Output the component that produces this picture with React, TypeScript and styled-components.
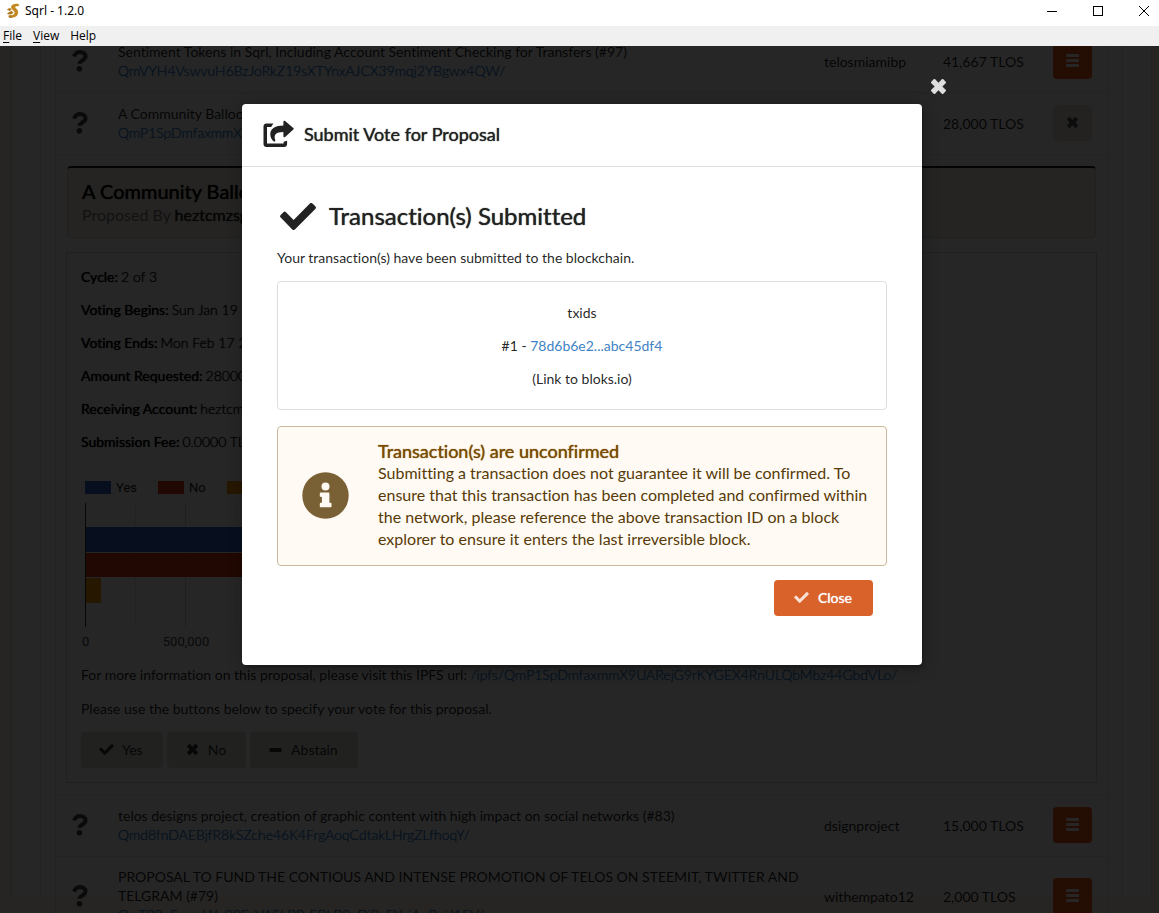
import React from "react";
import styled, { createGlobalStyle, css } from "styled-components";

const Global = createGlobalStyle`
  *, *::before, *::after { box-sizing: border-box; }
  html, body { margin: 0; padding: 0; }
  body {
    font-family: Lato, "Liberation Sans", sans-serif;
    font-size: 14px;
    line-height: 19px;
    font-variant-ligatures: no-common-ligatures;
    color: rgba(0, 0, 0, 0.87);
    overflow: hidden;
  }
  button { font-family: inherit; font-variant-ligatures: inherit; }
  h1, h2, h3, p { margin: 0; font-weight: 400; }
`;

const fauxBold = css`
  font-weight: 400;
  text-shadow: 0 0 1px currentColor;
`;

/* ---------- window chrome ---------- */

const Window = styled.div`
  display: flex;
  flex-direction: column;
  height: 100vh;
  overflow: hidden;
`;

const TitleBar = styled.header`
  display: flex;
  align-items: center;
  flex: none;
  height: 26px;
  padding: 0 7px 5px 6px;
  background: #fff;
  color: #000;
  font: 12px/16px "Noto Sans", "Open Sans", sans-serif;
`;

const AppName = styled.span`
  flex: 1;
  margin-left: 5px;
`;

const WindowControls = styled.div`
  display: flex;
  gap: 30px;
`;

const WindowButton = styled.button`
  display: flex;
  width: 16px;
  height: 16px;
  padding: 0;
  border: 0;
  background: none;
`;

const MenuBar = styled.nav`
  display: flex;
  align-items: center;
  flex: none;
  gap: 11px;
  height: 20px;
  padding: 0 3px;
  background: #f0f0f0;
`;

const MenuButton = styled.button`
  padding: 0;
  border: 0;
  background: none;
  color: #000;
  font: 12px/16px "Open Sans", "Noto Sans", sans-serif;

  u { text-underline-offset: 2px; }
`;

const Stage = styled.div`
  position: relative;
  flex: 1;
  min-height: 0;
  overflow: hidden;
  background: #fcf3e6;
`;

/* ---------- page below the dimmer ---------- */

const Page = styled.main`
  height: 100%;
  margin: 0 7px 0 11px;
  border: solid #e2e0dc;
  border-width: 0 1px;
  padding: 0 28px;
  background: #fff;
`;

const Panel = styled.section`
  height: 100%;
  border: solid #e0e0e0;
  border-width: 0 1px;
  padding: 0 14px;
`;

const ProposalTable = styled.table`
  width: 100%;
  margin-top: -17px;
  border: 1px solid #e0e0e0;
  border-collapse: separate;
  border-spacing: 0;
  table-layout: fixed;
`;

const Column = styled.col<{ $w?: number }>`
  width: ${(p) => (p.$w ? `${p.$w}px` : "auto")};
`;

const Cell = styled.td<{ $icon?: boolean }>`
  height: 62px;
  padding: ${(p) => (p.$icon ? "10px 14px 12px 11px" : "10px 11px 12px")};
  border-top: 1px solid #e8e8e8;
  vertical-align: middle;
  text-align: ${(p) => (p.$icon ? "center" : "left")};

  > svg { display: inline-block; vertical-align: middle; }
`;

const DataCell = styled(Cell)`
  padding: 11px;
`;

const DetailCell = styled.td`
  padding: 11px 10px;
  border-top: 1px solid #e8e8e8;
`;

const Link = styled.a`
  color: #4183c4;
  text-decoration: none;
`;

const PageLink = styled(Link)`
  color: #1f74c8;
  font-weight: 300;
  text-shadow: 0 0 1px currentColor;
`;

const BlockLink = styled(PageLink)`
  display: block;
`;

const IconButton = styled.button<{ $orange?: boolean }>`
  display: flex;
  align-items: center;
  justify-content: center;
  width: 39px;
  height: 36px;
  padding: 0 0 1px;
  border: 0;
  border-radius: 4px;
  background: ${(p) => (p.$orange ? "#f2570f" : "#e8e5df")};
  color: ${(p) => (p.$orange ? "#fff" : "#555")};
`;

const DetailHeader = styled.div`
  height: 72px;
  margin: 0 1px;
  padding: 10px 14px;
  border: 1px solid #d8d4ce;
  border-top: 2px solid #1b1c1d;
  border-radius: 4px;
  background: #f8f2ea;
`;

const DetailTitle = styled.h2`
  ${fauxBold}
  font-size: 20px;
  line-height: 26px;
  color: #000;
`;

const Proposer = styled.p`
  font-size: 16px;
  line-height: 22px;
  color: #777;

  b { ${fauxBold} color: #222; }
`;

const DetailBody = styled.div`
  margin-top: 14px;
  height: 531px;
  padding: 14px;
  border: 1px solid #d4d4d5;
`;

const Facts = styled.dl`
  display: grid;
  gap: 14px;
  margin: 0;

  div { display: flex; gap: 3px; white-space: nowrap; }
  dt { ${fauxBold} color: #000; }
  dd { margin: 0; color: #000; font-weight: 300; text-shadow: 0 0 1px currentColor; }
`;

const Chart = styled.svg`
  display: block;
  width: 100%;
  height: 180px;
  margin: 24px 0 9px;
  font-family: Roboto, "Liberation Sans", sans-serif;
  font-size: 13px;
`;

const Note = styled.p`
  margin-bottom: 13px;
  line-height: 21px;
`;

const VoteButtons = styled.div`
  display: flex;
  gap: 4px;
`;

const VoteButton = styled.button`
  display: flex;
  align-items: center;
  gap: 8px;
  height: 36px;
  padding: 0 20px 1px 18px;
  border: 0;
  border-radius: 4px;
  background: #dddad3;
  color: #333;
  font-size: 14px;

  svg { width: 15px; }
`;

/* ---------- dimmer and dialog ---------- */

const Dimmer = styled.div`
  position: absolute;
  inset: 0;
  display: flex;
  align-items: flex-start;
  justify-content: center;
  padding: 58px 0 0 5px;
  background: rgba(0, 0, 0, 0.85);
`;

const Dialog = styled.div`
  position: relative;
  width: 680px;
  border-radius: 4px;
  background: #fff;
  box-shadow: 1px 3px 3px 0 rgba(0, 0, 0, 0.2), 1px 3px 15px 2px rgba(0, 0, 0, 0.2);
`;

const DismissButton = styled.button`
  position: absolute;
  top: -25px;
  right: -24px;
  display: flex;
  padding: 0;
  border: 0;
  background: none;
  color: #dedede;
`;

const DialogHeader = styled.header`
  display: flex;
  align-items: center;
  gap: 10px;
  height: 63px;
  padding: 0 21px 2px;
  border-bottom: 1px solid #dededf;
`;

const DialogTitle = styled.h1`
  ${fauxBold}
  font-size: 18px;
  line-height: 24px;
  color: #222;
`;

const DialogBody = styled.div`
  padding: 33px 35px 49px;
`;

const Submitted = styled.h2`
  ${fauxBold}
  display: flex;
  align-items: center;
  gap: 12px;
  padding-left: 2px;
  font-size: 24px;
  line-height: 32px;
  color: #222;
`;

const Lead = styled.p`
  margin: 16px 0 14px;
`;

const TxBox = styled.div`
  display: grid;
  gap: 14px;
  padding: 21px 14px;
  border: 1px solid #dededf;
  border-radius: 4px;
  text-align: center;
`;

const Warning = styled.div`
  display: flex;
  align-items: center;
  gap: 29px;
  margin: 16px 0 14px;
  padding: 13px 14px 15px 24px;
  border: 1px solid #c9ba9b;
  border-radius: 4px;
  background: #fffaf3;
  color: #573a08;
  font-size: 16px;
  line-height: 22px;

  > svg { flex: none; }
`;

const WarningTitle = styled.h3`
  ${fauxBold}
  font-size: 18px;
  line-height: 22px;
  color: #794b02;
`;

const Actions = styled.div`
  display: flex;
  justify-content: flex-end;
  padding-right: 14px;
`;

const CloseButton = styled.button`
  ${fauxBold}
  display: flex;
  align-items: center;
  gap: 9px;
  height: 36px;
  padding: 0 21px 1px 20px;
  border: 0;
  border-radius: 4px;
  background: #d9622b;
  color: #fff;
  font-size: 14px;
`;

/* ---------- icons ---------- */

type IconProps = { w: number; h: number };

const Check = ({ w, h, opacity = 1 }: IconProps & { opacity?: number }) => (
  <svg width={w} height={h} viewBox="0 0 36 27" fill="currentColor" opacity={opacity} aria-hidden>
    <path d="M.7 14.5a1.8 1.8 0 0 1 0-2.6l2.7-2.7a1.8 1.8 0 0 1 2.6 0l7.6 7.7L29.9.6a1.8 1.8 0 0 1 2.6 0l2.8 2.7a1.8 1.8 0 0 1 0 2.6L14.9 26.4a1.8 1.8 0 0 1-2.6 0z" />
  </svg>
);

const Cross = ({ w, h }: IconProps) => (
  <svg width={w} height={h} viewBox="0 0 14 14" fill="currentColor" aria-hidden>
    <path d="M13.7 10.1c.4.4.4 1 0 1.400l-2.200 2.200c-.4.4-1 .4-1.400 0L7 10.600l-3.100 3.100c-.4.4-1 .4-1.400 0L.3 11.500c-.4-.4-.4-1 0-1.400L3.400 7 .3 3.900c-.4-.4-.4-1 0-1.400L2.500.3c.4-.4 1-.4 1.400 0L7 3.400 10.100.3c.4-.4 1-.4 1.400 0l2.200 2.200c.4.4.4 1 0 1.400L10.600 7z" />
  </svg>
);

const Minus = () => (
  <svg width="12" height="12" viewBox="0 0 12 12" fill="currentColor" aria-hidden>
    <rect y="4" width="12" height="4" rx="1" />
  </svg>
);

const Bars = () => (
  <svg width="13" height="13" viewBox="0 0 13 13" fill="currentColor" aria-hidden>
    <rect y="0" width="13" height="3" rx="1" />
    <rect y="5" width="13" height="3" rx="1" />
    <rect y="10" width="13" height="3" rx="1" />
  </svg>
);

const Question = () => (
  <svg width="16" height="22" viewBox="0 0 16 22" aria-hidden>
    <path d="M2 6.500C3.400 3.300 5.200 2 8 2c3 0 5.500 1.700 5.500 4.500 0 4-6 3.800-6 7.300" fill="none" stroke="#444" strokeWidth="4" />
    <circle cx="7.400" cy="18.700" r="2.800" fill="#444" />
  </svg>
);

const Share = () => (
  <svg width="31" height="28" viewBox="0 0 31 28" fill="#222" aria-hidden>
    <path d="M10.500 3.500H3.300C1.800 3.500.500 4.800.500 6.300v17.900C.500 25.700 1.800 27 3.300 27h18c1.500 0 2.800-1.300 2.800-2.800v-3.400l-3.500 1v1.700H4V7h4.200c.6-1.300 1.300-2.500 2.300-3.500z" />
    <path d="M30.300 8.100 22.100.900c-.7-.6-1.700-.1-1.700.8v3.700C12.500 5.600 7.300 8 7.300 14.400c0 2.900 1.500 5.600 3.600 7 .7.500 1.700-.1 1.400-.9-1.900-6.500.8-8.500 8.100-8.600v4.300c0 .9 1 1.400 1.700.8l8.200-7.400c.5-.4.5-1.100 0-1.500z" />
  </svg>
);

const Info = () => (
  <svg width="47" height="47" viewBox="0 0 47 47" aria-hidden>
    <circle cx="23.500" cy="23.500" r="23.200" fill="#7a6035" />
    <g fill="#fffaf3">
      <circle cx="23.500" cy="14.400" r="4" />
      <path d="M18.900 20.400h7.400c.6 0 1.100.5 1.100 1.100v9.300h1c.6 0 1.100.5 1.100 1.100v2.300c0 .6-.5 1.100-1.100 1.100h-9.500c-.6 0-1.100-.5-1.100-1.100v-2.300c0-.6.5-1.100 1.100-1.100h1v-5.900h-1c-.6 0-1.100-.5-1.100-1.100v-2.300c0-.6.5-1.100 1.100-1.100z" />
    </g>
  </svg>
);

const Squirrel = () => (
  <svg width="14" height="16" viewBox="0 0 14 16" aria-hidden>
    <path d="M13 1.200C10 .2 6 .8 5.200 3.300c-.6 2.200.9 3.200 2.300 4.400 1.500 1.300 1.300 2.700.3 3.600-1.300 1.200-3.300 1-4.800.6 1 2.600 5 3.400 7.400 1.400 2.300-2 2.200-5.300.3-7.200C9.500 5 8.700 4.200 9.700 3.500c.8-.5 2-.1 3-.6z" fill="#c48a22" />
    <path d="M.8 6.500 4 4.800l1.600 2-2 1.200zM1.500 10l4-2.200 2 2L5 11.500l-3.500-.3zM2 12.800l3-.3 1.800 2.300-3.300.2z" fill="#b07a20" />
  </svg>
);

/* ---------- content ---------- */

type Proposal = { title: string; cid: string; owner: string; amount: string; open?: boolean };

const before: Proposal[] = [
  { title: "Sentiment Tokens in Sqrl, Including Account Sentiment Checking for Transfers (#97)", cid: "QmVYH4VswvuH6BzJoRkZ19sXTYnxAJCX39mqj2YBgwx4QW/", owner: "telosmiamibp", amount: "41,667 TLOS" },
  { title: "A Community Balloon", cid: "QmP1SpDmfaxmmX9UARejG9rKYGEX4RnULQbMbz44GbdVLo/", owner: "heztcmzsgqge", amount: "28,000 TLOS", open: true },
];

const after: Proposal[] = [
  { title: "telos designs project, creation of graphic content with high impact on social networks (#83)", cid: "Qmd8fnDAEBjfR8kSZche46K4FrgAoqCdtakLHrgZLfhoqY/", owner: "dsignproject", amount: "15,000 TLOS" },
  { title: "PROPOSAL TO FUND THE CONTIOUS AND INTENSE PROMOTION OF TELOS ON STEEMIT, TWITTER AND TELGRAM (#79)", cid: "QmT38oSwpuWu28EeVASLBPsFBLB2gDj9aEYvjAnBoiJ15V/", owner: "withempato12", amount: "2,000 TLOS" },
];

const facts = [
  ["Cycle:", "2 of 3"],
  ["Voting Begins:", "Sun Jan 19 2020"],
  ["Voting Ends:", "Mon Feb 17 2020"],
  ["Amount Requested:", "28000 TLOS"],
  ["Receiving Account:", "heztcmzsgqge"],
  ["Submission Fee:", "0.0000 TLOS"],
];

const ProposalRow = ({ p }: { p: Proposal }) => (
  <tr>
    <Cell $icon><Question /></Cell>
    <Cell>
      {p.title}
      <BlockLink href="#">{p.cid}</BlockLink>
    </Cell>
    <DataCell>{p.owner}</DataCell>
    <DataCell>{p.amount}</DataCell>
    <Cell>
      <IconButton $orange={!p.open} aria-label={p.open ? "Collapse" : "Details"}>
        {p.open ? <Cross w={11} h={11} /> : <Bars />}
      </IconButton>
    </Cell>
  </tr>
);

const VoteChart = () => (
  <Chart role="img" aria-label="Votes">
    <g>
      <rect x="4" y="6" width="26" height="13" fill="#3366cc" />
      <text x="35" y="17" fill="#222">Yes</text>
      <rect x="77" y="6" width="26" height="13" fill="#dc3912" />
      <text x="108" y="17" fill="#222">No</text>
      <rect x="146" y="6" width="26" height="13" fill="#ff9900" />
    </g>
    <g>
      <rect x="54" y="28" width="1" height="124" fill="#ebebeb" />
      <rect x="104" y="28" width="1" height="124" fill="#ccc" />
      <rect x="155" y="28" width="1" height="124" fill="#ebebeb" />
      <rect x="4" y="52" width="400" height="25" fill="#3366cc" />
      <rect x="4" y="78" width="300" height="24" fill="#dc3912" />
      <rect x="4" y="103" width="16" height="25" fill="#ff9900" />
      <rect x="4" y="28" width="1" height="124" fill="#333" />
    </g>
    <text x="1" y="171" fill="#444">0</text>
    <text x="105" y="171" fill="#444" textAnchor="middle">500,000</text>
  </Chart>
);

export default function App() {
  return (
    <Window>
      <Global />
      <TitleBar>
        <Squirrel />
        <AppName>Sqrl - 1.2.0</AppName>
        <WindowControls>
          <WindowButton aria-label="Minimize">
            <svg width="16" height="16"><path d="M3 8.500h10" stroke="#000" /></svg>
          </WindowButton>
          <WindowButton aria-label="Maximize">
            <svg width="16" height="16"><rect x="3.500" y="3.500" width="9" height="9" fill="none" stroke="#000" /></svg>
          </WindowButton>
          <WindowButton aria-label="Close window">
            <svg width="16" height="16"><path d="M3 3l10 10M13 3L3 13" stroke="#000" /></svg>
          </WindowButton>
        </WindowControls>
      </TitleBar>
      <MenuBar>
        <MenuButton><u>F</u>ile</MenuButton>
        <MenuButton><u>V</u>iew</MenuButton>
        <MenuButton>Help</MenuButton>
      </MenuBar>
      <Stage>
        <Page>
          <Panel>
            <ProposalTable>
              <colgroup>
                <Column $w={51} />
                <Column />
                <Column $w={119} />
                <Column $w={110} />
                <Column $w={65} />
              </colgroup>
              <tbody>
                {before.map((p) => <ProposalRow key={p.cid} p={p} />)}
                <tr>
                  <DetailCell colSpan={5}>
                    <DetailHeader>
                      <DetailTitle>A Community Balloon</DetailTitle>
                      <Proposer>Proposed By <b>heztcmzsgqge</b></Proposer>
                    </DetailHeader>
                    <DetailBody>
                      <Facts>
                        {facts.map(([k, v]) => (
                          <div key={k}><dt>{k}</dt><dd>{v}</dd></div>
                        ))}
                      </Facts>
                      <VoteChart />
                      <Note>
                        For more information on this proposal, please visit this IPFS url:{" "}
                        <PageLink href="#">/ipfs/QmP1SpDmfaxmmX9UARejG9rKYGEX4RnULQbMbz44GbdVLo/</PageLink>
                      </Note>
                      <Note>Please use the buttons below to specify your vote for this proposal.</Note>
                      <VoteButtons>
                        <VoteButton><Check w={15} h={11} /> Yes</VoteButton>
                        <VoteButton><Cross w={11} h={11} /> No</VoteButton>
                        <VoteButton><Minus /> Abstain</VoteButton>
                      </VoteButtons>
                    </DetailBody>
                  </DetailCell>
                </tr>
                {after.map((p) => <ProposalRow key={p.cid} p={p} />)}
              </tbody>
            </ProposalTable>
          </Panel>
        </Page>
        <Dimmer>
          <Dialog role="dialog" aria-modal="true" aria-labelledby="dialog-title">
            <DismissButton aria-label="Dismiss"><Cross w={15} h={15} /></DismissButton>
            <DialogHeader>
              <Share />
              <DialogTitle id="dialog-title">Submit Vote for Proposal</DialogTitle>
            </DialogHeader>
            <DialogBody>
              <Submitted><Check w={38} h={27} />Transaction(s) Submitted</Submitted>
              <Lead>Your transaction(s) have been submitted to the blockchain.</Lead>
              <TxBox>
                <p>txids</p>
                <p>#1 - <Link href="#">78d6b6e2...abc45df4</Link></p>
                <p>(Link to bloks.io)</p>
              </TxBox>
              <Warning>
                <Info />
                <div>
                  <WarningTitle>Transaction(s) are unconfirmed</WarningTitle>
                  <p>
                    Submitting a transaction does not guarantee it will be confirmed. To ensure that this
                    transaction has been completed and confirmed within the network, please reference the
                    above transaction ID on a block explorer to ensure it enters the last irreversible block.
                  </p>
                </div>
              </Warning>
              <Actions>
                <CloseButton><Check w={15} h={11} opacity={0.8} />Close</CloseButton>
              </Actions>
            </DialogBody>
          </Dialog>
        </Dimmer>
      </Stage>
    </Window>
  );
}
